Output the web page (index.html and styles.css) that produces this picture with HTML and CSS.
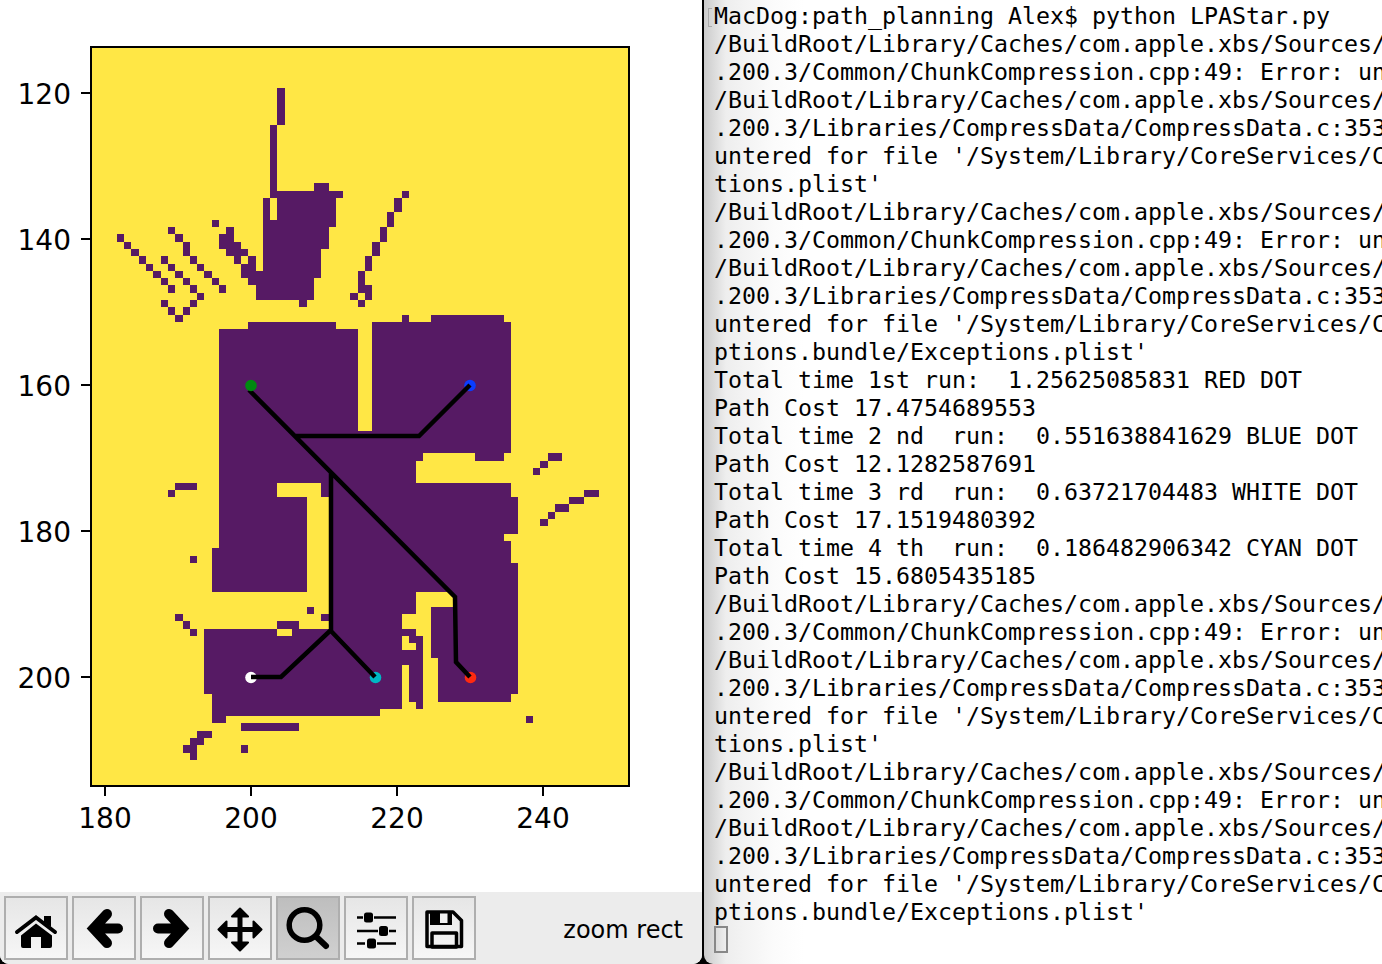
FILE: index.html
```html
<!DOCTYPE html>
<html lang="en">
<head>
    <meta charset="UTF-8">
    <meta name="viewport" content="width=device-width, initial-scale=1.0">
    <title>LPAStar</title>
    <link rel="stylesheet" href="styles.css">
</head>
<body>
    <div class="figure-window">
        <svg class="plot" viewBox="0 0 702 892" width="702" height="892">
            <!-- ticks -->
            <g class="ticks">
                <path d="M81 93H90M81 239H90M81 385H90M81 531H90M81 677H90"/>
                <path d="M105 787V796M251 787V796M397 787V796M543 787V796"/>
            </g>
            <g class="tick-labels y-labels">
                <text x="71" y="104">120</text>
                <text x="71" y="250">140</text>
                <text x="71" y="396">160</text>
                <text x="71" y="542">180</text>
                <text x="71" y="688">200</text>
            </g>
            <g class="tick-labels x-labels">
                <text x="105" y="828">180</text>
                <text x="251" y="828">200</text>
                <text x="397" y="828">220</text>
                <text x="543" y="828">240</text>
            </g>

            <!-- map, one unit is one grid cell -->
            <svg x="92" y="48" width="536" height="737" viewBox="-3.397 -5.534 73.42 100.96" preserveAspectRatio="none">
                <rect class="free" x="-4" y="-6" width="75" height="102"/>
                <path class="wall" d="
                    M22 0H23V5H22Z M21 5H22V15H21Z M21 14H31V15H21Z M27 13H29V14H27Z
                    M20 15H21V18H20Z M22 15H30V18H22Z M20 18H30V19H20Z M20 19H29V22H20Z M20 22H28V25H20Z
                    M16 23H17V24H16Z M18 23H19V24H18Z M17 24H19V25H17Z M17 25H28V26H17Z M18 26H27V27H18Z M19 27H27V29H19Z M25 29H26V30H25Z
                    M13 18H14V19H13Z M15 19H16V20H15Z M14 20H16V21H14Z M14 21H17V22H14Z M15 22H18V23H15Z
                    M7 19H8V20H7Z M8 20H9V21H8Z M9 21H10V23H9Z M10 23H11V24H10Z M11 24H12V25H11Z M12 25H13V26H12Z M13 26H14V27H13Z M14 27H15V28H14Z
                    M0 20H1V21H0Z M1 21H2V22H1Z M2 22H3V23H2Z M3 23H4V24H3Z M4 24H5V25H4Z M5 25H6V26H5Z M6 26H7V27H6Z M7 27H8V28H7Z
                    M6 23H7V24H6Z M7 24H8V25H7Z M8 25H9V26H8Z M9 26H10V27H9Z M10 27H11V28H10Z M11 28H12V29H11Z M10 29H11V30H10Z M9 30H10V31H9Z M8 31H9V32H8Z M7 30H8V31H7Z M6 29H7V30H6Z
                    M39 14H40V15H39Z M38 15H39V17H38Z M37 17H38V19H37Z M36 19H37V21H36Z M35 21H36V23H35Z M34 23H35V25H34Z M33 25H34V28H33Z M34 27H35V29H34Z M32 28H33V29H32Z M33 29H34V30H33Z
                    M18 32H30V33H18Z M14 33H33V47H14Z M39 31H40V32H39Z M43 31H53V32H43Z M35 32H54V47H35Z
                    M14 47H54V50H14Z M14 50H42V51H14Z M49 50H53V51H49Z M14 51H41V54H14Z M14 54H54V56H14Z M14 56H55V61H14Z M14 61H53V62H14Z M14 62H54V63H14Z
                    M13 63H54V65H13Z M13 65H55V69H13Z M29 69H55V74H29Z M12 74H55V83H12Z M13 83H54V84H13Z M13 84H39V85H13Z M41 84H42V85H41Z M13 85H36V86H13Z M13 86H15V87H13Z
                    M59 50H61V51H59Z M58 51H59V52H58Z M57 52H58V53H57Z
                    M64 55H66V56H64Z M62 56H64V57H62Z M60 57H62V58H60Z M59 58H60V59H59Z M58 59H59V60H58Z
                    M8 54H11V55H8Z M7 55H8V56H7Z M10 64H11V65H10Z
                    M26 71H27V72H26Z M28 72H29V73H28Z M22 73H25V74H22Z
                    M8 72H9V73H8Z M9 73H10V74H9Z M10 74H11V75H10Z
                    M17 87H25V88H17Z M11 88H13V89H11Z M10 89H12V90H10Z M9 90H11V91H9Z M10 91H11V92H10Z M17 90H18V91H17Z M56 86H57V87H56Z"/>
                <path class="free" d="
                    M22 54H28V56H22Z M26 56H29V69H26Z M22 74H24V75H22Z
                    M41 69H46V71H41Z M41 71H43V72H41Z M39 72H43V74H39Z M41 74H43V75H41Z M42 75H43V78H42Z M42 78H44V84H42Z
                    M39 75H40V77H39Z M40 76H41V77H40Z M39 79H40V84H39Z"/>
            </svg>

            <!-- goals and paths -->
            <circle class="dot-blue" cx="470" cy="385.500" r="5.800"/>
            <circle class="dot-white" cx="251" cy="677.500" r="5.800"/>
            <circle class="dot-cyan" cx="375.500" cy="677.500" r="5.800"/>
            <circle class="dot-red" cx="470.500" cy="677.500" r="5.800"/>
            <path class="route" d="M249 390L455 597L456 662L470 677M296 436H419L470 385M331 472V630L281 677H251M330 630L375 677"/>
            <circle class="dot-green" cx="251" cy="385.500" r="5.800"/>

            <rect class="frame" x="91" y="47" width="538" height="739"/>
        </svg>

        <div class="toolbar">
            <button class="tool">
                <svg viewBox="0 0 60 60" width="60" height="60">
                    <path class="solid" d="M38 18H45V29L38 24Z"/>
                    <path class="line-4" d="M11 34L30 19.500L49 34"/>
                    <path class="solid" d="M30 25.500L46 37.500V48Q46 50 44 50H35V39H25V50H17Q15 50 15 48V37.500Z"/>
                </svg>
            </button>
            <button class="tool">
                <svg viewBox="0 0 60 60" width="60" height="60">
                    <path class="arrow" d="M33 16L19.500 30.500L33 45M20 30.500H44"/>
                </svg>
            </button>
            <button class="tool">
                <svg viewBox="0 0 60 60" width="60" height="60">
                    <path class="arrow" d="M27 16L40.500 30.500L27 45M40 30.500H16"/>
                </svg>
            </button>
            <button class="tool">
                <svg viewBox="0 0 60 60" width="60" height="60">
                    <path class="solid rounded" d="M30 10.500L38 18.500H22Z M30 52.500L38 44.500H22Z M8.500 31.500L16.500 23.500V39.500Z M51.500 31.500L43.500 23.500V39.500Z"/>
                    <path class="line-5" d="M30 18V45M16 31.500H44"/>
                </svg>
            </button>
            <button class="tool active">
                <svg viewBox="0 0 60 60" width="60" height="60">
                    <circle class="ring" cx="26.500" cy="27" r="15.300"/>
                    <path class="line-6" d="M38 38.500L48 48"/>
                </svg>
            </button>
            <button class="tool">
                <svg viewBox="0 0 60 60" width="60" height="60">
                    <path class="line-2" d="M11 19.500H17M28 19.500H50M11 33H32M43 33H50M11 45.500H19M31 45.500H50"/>
                    <rect class="solid" x="18" y="14.500" width="9" height="10" rx="2.500"/>
                    <rect class="solid" x="33" y="28" width="9" height="10" rx="2.500"/>
                    <rect class="solid" x="21" y="40.500" width="9" height="10" rx="2.500"/>
                </svg>
            </button>
            <button class="tool">
                <svg viewBox="0 0 60 60" width="60" height="60">
                    <path class="outline" d="M13 14H39L47.500 22.500V48.500H13Z"/>
                    <path class="solid" d="M16 14H38V27H16Z"/>
                    <rect class="window" x="26" y="15.500" width="7.500" height="9.500"/>
                    <rect class="outline" x="18" y="35" width="24.500" height="14"/>
                </svg>
            </button>
            <span class="mode">zoom rect</span>
        </div>
    </div>

    <div class="terminal">
        <span class="mark"></span>
<pre class="output">MacDog:path_planning Alex$ python LPAStar.py
/BuildRoot/Library/Caches/com.apple.xbs/Sources/
.200.3/Common/ChunkCompression.cpp:49: Error: un
/BuildRoot/Library/Caches/com.apple.xbs/Sources/
.200.3/Libraries/CompressData/CompressData.c:353
untered for file '/System/Library/CoreServices/C
tions.plist'
/BuildRoot/Library/Caches/com.apple.xbs/Sources/
.200.3/Common/ChunkCompression.cpp:49: Error: un
/BuildRoot/Library/Caches/com.apple.xbs/Sources/
.200.3/Libraries/CompressData/CompressData.c:353
untered for file '/System/Library/CoreServices/C
ptions.bundle/Exceptions.plist'
Total time 1st run:  1.25625085831 RED DOT
Path Cost 17.4754689553
Total time 2 nd  run:  0.551638841629 BLUE DOT
Path Cost 12.1282587691
Total time 3 rd  run:  0.63721704483 WHITE DOT
Path Cost 17.1519480392
Total time 4 th  run:  0.186482906342 CYAN DOT
Path Cost 15.6805435185
/BuildRoot/Library/Caches/com.apple.xbs/Sources/
.200.3/Common/ChunkCompression.cpp:49: Error: un
/BuildRoot/Library/Caches/com.apple.xbs/Sources/
.200.3/Libraries/CompressData/CompressData.c:353
untered for file '/System/Library/CoreServices/C
tions.plist'
/BuildRoot/Library/Caches/com.apple.xbs/Sources/
.200.3/Common/ChunkCompression.cpp:49: Error: un
/BuildRoot/Library/Caches/com.apple.xbs/Sources/
.200.3/Libraries/CompressData/CompressData.c:353
untered for file '/System/Library/CoreServices/C
ptions.bundle/Exceptions.plist'</pre>
        <div class="cursor"></div>
    </div>
</body>
</html>
```

FILE: styles.css
```css
html, body {
    margin: 0;
    height: 964px;
    overflow: hidden;
}
body {
    display: flex;
    gap: 2px;
    background-color: #000;
}

/* left window */
.figure-window {
    width: 702px;
    height: 964px;
    display: flex;
    flex-direction: column;
    background-color: #fff;
    border-radius: 0 0 9px 9px;
    overflow: hidden;
}
.plot {
    display: block;
    flex: none;
}
.free { fill: #ffe745; }
.wall { fill: #561a64; }
.free, .wall { shape-rendering: crispEdges; }
.frame {
    fill: none;
    stroke: #000;
    stroke-width: 2;
}
.ticks path {
    fill: none;
    stroke: #000;
    stroke-width: 2;
}
.tick-labels {
    font-family: "DejaVu Sans", sans-serif;
    font-size: 28px;
    fill: #000;
}
.y-labels { text-anchor: end; }
.x-labels { text-anchor: middle; }
.route {
    fill: none;
    stroke: #000;
    stroke-width: 4.500;
}
.dot-green { fill: #008a10; }
.dot-blue { fill: #0a3cff; }
.dot-white { fill: #fff; }
.dot-cyan { fill: #00b8c4; }
.dot-red { fill: #ff2a10; }

/* toolbar */
.toolbar {
    flex: 1;
    display: flex;
    align-items: flex-start;
    gap: 4px;
    padding: 4px 0 0 4px;
    background-color: #ececec;
}
.tool {
    width: 64px;
    height: 64px;
    padding: 0;
    border: 2px solid #aeaeae;
    background: linear-gradient(#e6e6e6, #f6f6f6);
}
.tool svg { display: block; }
.tool.active { background: linear-gradient(#bebebe, #d0d0d0); }
.mode {
    margin-left: auto;
    margin-right: 19px;
    margin-top: 20px;
    font-family: "DejaVu Sans", sans-serif;
    font-size: 24px;
    line-height: 28px;
    color: #000;
}
.solid { fill: #000; }
.rounded {
    stroke: #000;
    stroke-width: 2;
    stroke-linejoin: round;
}
.line-2, .line-4, .line-5, .line-6, .arrow, .ring, .outline {
    fill: none;
    stroke: #000;
}
.line-2 { stroke-width: 2.500; }
.line-4 { stroke-width: 4; stroke-linecap: round; }
.line-5 { stroke-width: 5; stroke-linecap: round; }
.line-6 { stroke-width: 6; stroke-linecap: round; }
.arrow { stroke-width: 10; stroke-linecap: round; }
.ring { stroke-width: 5.500; }
.outline { stroke-width: 3.500; stroke-linejoin: round; }
.window { fill: #f0f0f0; }

/* terminal */
.terminal {
    position: relative;
    flex: 1;
    height: 964px;
    padding: 2px 0 0 10px;
    box-sizing: border-box;
    overflow: hidden;
    background: linear-gradient(to right, #cbcbcb, #eeeeee 22px, #fbfbfb 70px, #fff 100px);
    border-bottom-left-radius: 9px;
}
.output {
    margin: 0;
    font-family: "DejaVu Sans Mono", monospace;
    font-size: 23.250px;
    line-height: 28px;
    color: #000;
    white-space: pre;
}
.mark {
    position: absolute;
    left: 4px;
    top: 8px;
    width: 3px;
    height: 17px;
    border: 1px solid #aaa;
    border-right: none;
}
.cursor {
    width: 14px;
    height: 27px;
    box-sizing: border-box;
    border: 2px solid #888;
}
```
